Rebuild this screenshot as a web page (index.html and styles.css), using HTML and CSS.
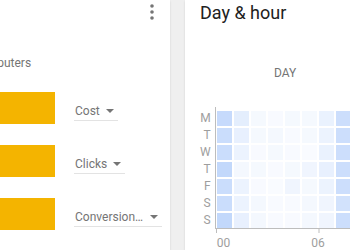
FILE: index.html
```html
<!DOCTYPE html>
<html lang="en">
<head>
    <meta charset="UTF-8">
    <meta name="viewport" content="width=device-width, initial-scale=1.0">
    <title>Devices and schedule</title>
    <link rel="stylesheet" href="styles.css">
</head>
<body>
    <div class="board">
        <div class="card devices">
            <div class="card-head">
                <svg class="more" viewBox="0 0 24 24" width="24" height="24">
                    <circle cx="12" cy="6" r="1.8"/>
                    <circle cx="12" cy="12" r="1.8"/>
                    <circle cx="12" cy="18" r="1.8"/>
                </svg>
            </div>
            <div class="device-name">Computers</div>
            <div class="metric-list">
                <div class="metric-row">
                    <div class="bar"></div>
                    <div class="picker"><span class="picker-text">Cost</span><span class="caret"></span></div>
                </div>
                <div class="metric-row">
                    <div class="bar"></div>
                    <div class="picker"><span class="picker-text">Clicks</span><span class="caret"></span></div>
                </div>
                <div class="metric-row">
                    <div class="bar"></div>
                    <div class="picker"><span class="picker-text wide">Conversion rate</span><span class="caret"></span></div>
                </div>
            </div>
        </div>

        <div class="card schedule">
            <h2 class="card-title">Day &amp; hour</h2>
            <div class="axis-title">DAY</div>
            <div class="heatmap">
                <div class="day-labels">
                    <span>M</span><span>T</span><span>W</span><span>T</span><span>F</span><span>S</span><span>S</span>
                </div>
                <div class="plot">
                    <div class="cells" id="cells"></div>
                    <div class="hours">
                        <span class="hour first">00</span>
                        <span class="hour" style="grid-column: 7">06</span>
                    </div>
                </div>
            </div>
        </div>
    </div>

    <script>
        // share of activity for each day (rows) and hour (columns)
        const weights = [
            [0.30, 0.14, 0.05, 0.04, 0.05, 0.05, 0.11, 0.27],
            [0.28, 0.12, 0.05, 0.06, 0.04, 0.05, 0.10, 0.27],
            [0.28, 0.10, 0.04, 0.05, 0.04, 0.03, 0.11, 0.27],
            [0.32, 0.06, 0.05, 0.04, 0.05, 0.08, 0.12, 0.27],
            [0.28, 0.10, 0.04, 0.03, 0.08, 0.05, 0.10, 0.27],
            [0.28, 0.10, 0.06, 0.04, 0.04, 0.06, 0.08, 0.24],
            [0.32, 0.12, 0.06, 0.04, 0.04, 0.06, 0.08, 0.27]
        ];

        const grid = document.getElementById('cells');
        weights.forEach(row => {
            for (let h = 0; h < 24; h++) {
                const w = h < row.length ? row[h] : 0.3;
                const cell = document.createElement('div');
                cell.className = 'cell';
                cell.style.background = `rgba(66, 133, 244, ${w})`;
                grid.appendChild(cell);
            }
        });
    </script>
</body>
</html>
```

FILE: styles.css
```css
* {
    margin: 0;
    padding: 0;
    box-sizing: border-box;
}

html, body {
    width: 350px;
    height: 250px;
    overflow: hidden;
}

body {
    font-family: Roboto, 'Noto Sans', Arial, sans-serif;
    background: #efefef;
}

.board {
    display: flex;
    gap: 15px;
    height: 100%;
}

.card {
    background: #fff;
    box-shadow: 0 1px 2px rgba(0, 0, 0, 0.12);
    height: 100%;
}

/* devices card, scrolled so its left part is out of view */
.devices {
    width: 240px;
    flex: none;
    margin-left: -70px;
    padding-left: 16px;
}

.card-head {
    display: flex;
    justify-content: flex-end;
    height: 24px;
    padding-right: 6px;
}

.more {
    fill: #757575;
}

.device-name {
    margin-top: 31px;
    padding-left: 26px;
    font-size: 12px;
    line-height: 16px;
    color: #757575;
}

.metric-list {
    display: flex;
    flex-direction: column;
    gap: 21px;
    margin-top: 21px;
}

.metric-row {
    display: flex;
    align-items: flex-start;
}

.bar {
    width: 109px;
    height: 32px;
    background: #f4b400;
}

.picker {
    display: flex;
    align-items: center;
    margin: 11px 0 0 19px;
    padding: 0 4px 1px 1px;
    border-bottom: 1px solid #e3e3e3;
    font-size: 12px;
    line-height: 16px;
    color: #757575;
}

.picker-text {
    white-space: nowrap;
}

.picker-text.wide {
    max-width: 69px;
    overflow: hidden;
    text-overflow: ellipsis;
}

.caret {
    width: 0;
    height: 0;
    margin-left: 6px;
    border-left: 4px solid transparent;
    border-right: 4px solid transparent;
    border-top: 4px solid #757575;
}

/* day & hour card */
.schedule {
    flex: 1;
    padding-left: 15px;
    min-width: 0;
}

.card-title {
    font-size: 18px;
    font-weight: 400;
    line-height: 24px;
    color: #212121;
    padding-top: 1px;
}

.axis-title {
    margin-top: 40px;
    padding-left: 74px;
    font-size: 12px;
    line-height: 16px;
    color: #757575;
}

.heatmap {
    display: flex;
    margin-top: 26px;
}

.day-labels {
    display: grid;
    grid-auto-rows: 15px;
    row-gap: 2px;
    width: 12px;
    margin-right: 4px;
    padding-top: 4px;
    font-size: 12px;
    line-height: 15px;
    color: #9e9e9e;
    text-align: right;
}

.plot {
    flex: none;
}

.cells {
    display: grid;
    grid-template-columns: repeat(24, 15px);
    grid-auto-rows: 15px;
    gap: 2px;
    padding: 4px 0 0 1px;
    border-left: 1px solid #bdbdbd;
    border-bottom: 1px solid #bdbdbd;
}

.hours {
    display: grid;
    grid-template-columns: repeat(24, 15px);
    column-gap: 2px;
    padding-left: 2px;
    font-size: 12px;
    line-height: 16px;
    color: #9e9e9e;
}

.hour {
    position: relative;
    padding-top: 6px;
    white-space: nowrap;
    transform: translateX(-50%);
}

.hour::before {
    content: "";
    position: absolute;
    top: 0;
    left: 50%;
    width: 1px;
    height: 4px;
    background: #bdbdbd;
}

.hour.first {
    grid-column: 1;
    transform: none;
}

.hour.first::before {
    left: -1px;
}
```
